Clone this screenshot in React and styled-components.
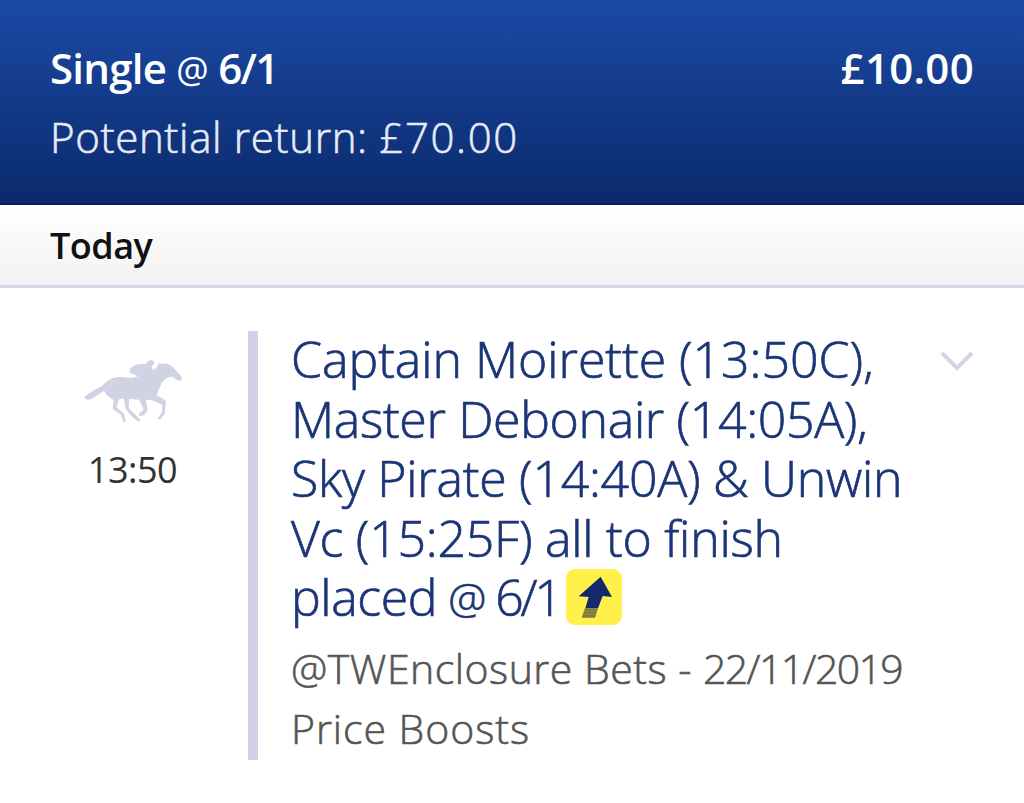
import React from 'react';
import styled, { createGlobalStyle } from 'styled-components';

const GlobalStyle = createGlobalStyle`
  * {
    box-sizing: border-box;
  }
  body {
    margin: 0;
    background: #fff;
    font-family: 'Open Sans', 'Noto Sans', sans-serif;
  }
  h1, h2, p {
    margin: 0;
    font-weight: inherit;
  }
`;

const Slip = styled.main`
  width: 1024px;
  height: 803px;
  overflow: hidden;
  background: #fff;
`;

// every line of copy is set with its own tracking
const Line = styled.span`
  display: block;
  width: max-content;
  white-space: nowrap;
  letter-spacing: ${({ $track }) => $track || 0}px;
`;

const Run = styled.span`
  letter-spacing: ${({ $track }) => $track || 0}px;
`;

const At = styled.span`
  font-size: 0.86em;
  line-height: 1;
  vertical-align: 0.04em;
  font-weight: ${({ $weight }) => $weight || 'inherit'};
`;

const Header = styled.header`
  height: 205px;
  padding: 35px 50px 0;
  color: #fff;
  background: linear-gradient(#1b4aa5, #0b2a6c);
  border-bottom: 2px solid #04205f;
`;

const HeaderRow = styled.div`
  display: flex;
  justify-content: space-between;
  height: 69px;
  font-size: 42px;
  line-height: 66px;
  font-weight: ${({ $strong }) => ($strong ? 600 : 300)};
  color: ${({ $strong }) => ($strong ? '#fff' : '#e6ebf7')};
  -webkit-text-stroke: ${({ $strong }) => ($strong ? '0' : '0.6px #e6ebf7')};
`;

const DayBar = styled.h2`
  height: 83px;
  padding: 2px 50px 0;
  font-size: 36px;
  line-height: 77px;
  font-weight: 600;
  color: #111;
  background: linear-gradient(#fff, #f2f2f2);
  border-bottom: 3px solid #d5d6e6;
`;

const Bet = styled.section`
  display: grid;
  grid-template-columns: 198px 10px 1fr 34px;
  padding: 43px 50px 0;
`;

const Event = styled.div`
  display: flex;
  flex-direction: column;
  align-items: center;
  width: 165px;
  padding-top: 28px;
`;

const Time = styled.div`
  margin-top: 22px;
  font-size: 36px;
  line-height: 48px;
  color: #333;
`;

const Divider = styled.div`
  height: 429px;
  background: #d1d2e6;
`;

const Details = styled.div`
  padding-left: 33px;
  margin-top: -1px;
`;

const Title = styled.h1`
  font-size: 50px;
  line-height: 59.5px;
  font-weight: 300;
  color: #1b3577;
  -webkit-text-stroke: 0.7px #1b3577;
`;

const LastLine = styled.div`
  display: flex;
  align-items: center;
  height: 59.5px;
`;

const Boost = styled.span`
  display: flex;
  width: 56px;
  height: 56px;
  margin: -2px 0 0 7px;
  border-radius: 9px;
  overflow: hidden;
  background: #fff04a;
`;

const Market = styled.p`
  margin-top: 10px;
  font-size: 41px;
  line-height: 60px;
  font-weight: 300;
  color: #555;
  -webkit-text-stroke: 0.6px #555;
`;

const Toggle = styled.div`
  padding-top: 19px;
`;

const HorseIcon = () => (
  <svg width='100' height='65' viewBox='40 42 300 195' fill='#d1d3e5'>
    <path d='M43 157 C60 143 80 130 96 124 C108 113 120 98 145 96 C160 95 173 99 190 98 L205 94 L181 84 C176 74 184 66 196 61 C209 55 220 57 230 56 C232 46 244 42 252 49 L254 57 L246 63 L250 75 L261 68 L268 53 L273 56 C292 54 307 60 315 72 L337 97 L334 107 L323 106 L310 96 C296 93 285 104 275 116 C269 127 265 142 261 149 C269 157 282 158 289 169 L285 207 L272 223 L263 221 L276 204 L279 180 L245 165 L228 164 L234 196 L223 211 L208 213 L207 207 L222 194 L208 164 L179 161 L177 190 L195 207 L213 226 L206 230 L186 214 L168 192 L162 160 L148 164 L140 186 L163 207 L168 230 L161 232 L154 210 L129 191 L132 165 C118 157 108 148 104 137 L70 159 C60 166 49 167 43 157 Z' />
  </svg>
);

const BoostIcon = () => (
  <svg width='56' height='56' viewBox='31 27 168 168'>
    <path d='M135 50 L169 111 L141 108 L127 145 L89 145 L99 111 L69 109 Z' fill='#13296e' />
    <path d='M88 145 H127 L118 173 H78 Z' fill='#7d7d3e' />
    <path d='M84 154 H123 M81 163 H120' stroke='#958f3d' strokeWidth='3' />
  </svg>
);

const ChevronIcon = () => (
  <svg width='34' height='22' viewBox='0 0 34 22' fill='none'>
    <path d='M2 3 L17 18 L32 3' stroke='#d3d4e5' strokeWidth='4' />
  </svg>
);

const titleLines = [
  { text: 'Captain Moirette (13:50C),', track: -0.05 },
  { text: 'Master Debonair (14:05A),', track: -0.35 },
  { text: 'Sky Pirate (14:40A) & Unwin', track: -0.27 },
  { text: 'Vc (15:25F) all to finish', track: -0.25 },
];

export default function App() {
  return (
    <Slip>
      <GlobalStyle />
      <Header>
        <HeaderRow $strong>
          <Line $track={-0.75}>
            Single <At $weight={400}>@</At> <Run $track={-1.6}>6/1</Run>
          </Line>
          <Line $track={0.3}>£10.00</Line>
        </HeaderRow>
        <HeaderRow>
          <Line $track={0.65}>
            Potential return: <Run $track={1.6}>£70.00</Run>
          </Line>
        </HeaderRow>
      </Header>

      <DayBar>
        <Line $track={-0.5}>Today</Line>
      </DayBar>

      <Bet>
        <Event>
          <HorseIcon />
          <Time>
            <Line $track={-0.5}>13:50</Line>
          </Time>
        </Event>
        <Divider />
        <Details>
          <Title>
            {titleLines.map(({ text, track }) => (
              <Line key={text} $track={track}>
                {text}
              </Line>
            ))}
            <LastLine>
              <Line $track={-0.4}>
                placed<Run $track={-2}> <At>@</At> </Run>
                <Run $track={-3.3}>6/1</Run>
              </Line>
              <Boost>
                <BoostIcon />
              </Boost>
            </LastLine>
          </Title>
          <Market>
            <Line $track={0.5}>
              @TWEnclosure Bets - <Run $track={-1.6}>22/11/2019</Run>
            </Line>
            <Line $track={0.95}>Price Boosts</Line>
          </Market>
        </Details>
        <Toggle>
          <ChevronIcon />
        </Toggle>
      </Bet>
    </Slip>
  );
}
